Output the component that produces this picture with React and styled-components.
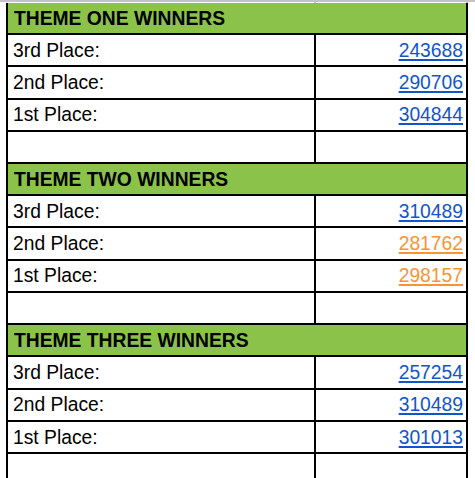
import React from "react";
import styled, { createGlobalStyle } from "styled-components";

const COLORS = {
  green: "#8bc34a",
  border: "#000000",
  grid: "#c4c4c4",
  link: "#1155cc",
  visited: "#f79433",
};

const SECTIONS = [
  {
    title: "THEME ONE WINNERS",
    rows: [
      { label: "3rd Place:", value: "243688" },
      { label: "2nd Place:", value: "290706" },
      { label: "1st Place:", value: "304844" },
    ],
  },
  {
    title: "THEME TWO WINNERS",
    rows: [
      { label: "3rd Place:", value: "310489" },
      { label: "2nd Place:", value: "281762", visited: true },
      { label: "1st Place:", value: "298157", visited: true },
    ],
  },
  {
    title: "THEME THREE WINNERS",
    rows: [
      { label: "3rd Place:", value: "257254" },
      { label: "2nd Place:", value: "310489" },
      { label: "1st Place:", value: "301013" },
    ],
  },
];

const App = () => {
  return (
    <>
      <GlobalStyle />
      <Page>
        <GridStrip>
          <GridTick />
          <GridTick />
          <span />
        </GridStrip>
        <Sheet>
          {SECTIONS.map((section) => (
            <React.Fragment key={section.title}>
              <Header>{section.title}</Header>
              {section.rows.map((row) => (
                <Row key={row.label}>
                  <LabelCell>{row.label}</LabelCell>
                  <ValueCell>
                    <Link href="#" $visited={row.visited}>
                      {row.value}
                    </Link>
                  </ValueCell>
                </Row>
              ))}
              <Row>
                <LabelCell />
                <ValueCell />
              </Row>
            </React.Fragment>
          ))}
        </Sheet>
      </Page>
    </>
  );
};

const GlobalStyle = createGlobalStyle`
  html, body {
    margin: 0;
    padding: 0;
    overflow: hidden;
    background: #ffffff;
  }
  body {
    font-family: "Liberation Sans", Arial, sans-serif;
  }
`;

const Page = styled.div`
  width: 475px;
  height: 478px;
  overflow: hidden;
`;

const GridStrip = styled.div`
  display: grid;
  grid-template-columns: 316px 152px 1fr;
  height: 3px;
  border-top: 2px solid ${COLORS.grid};
  box-sizing: border-box;
`;

const GridTick = styled.span`
  border-right: 2px solid ${COLORS.grid};
`;

const Sheet = styled.div`
  margin-left: 6px;
  width: 462px;
  border-left: 2px solid ${COLORS.border};
  border-right: 2px solid ${COLORS.border};
  box-sizing: border-box;
`;

const Header = styled.div`
  height: 32px;
  box-sizing: border-box;
  background: ${COLORS.green};
  border-bottom: 2px solid ${COLORS.border};
  padding: 1px 6px 0;
  display: flex;
  align-items: center;
  font-weight: bold;
  font-size: 19.3px;
  color: #000000;
`;

const Row = styled.div`
  display: grid;
  grid-template-columns: 308px 1fr;
  height: 32.3px;
  box-sizing: border-box;
  border-bottom: 2px solid ${COLORS.border};
`;

const Cell = styled.div`
  display: flex;
  align-items: center;
  padding: 1px 5px 0;
  font-size: 19.3px;
  color: #000000;
  white-space: nowrap;
`;

const LabelCell = styled(Cell)`
  border-right: 2px solid ${COLORS.border};
`;

const ValueCell = styled(Cell)`
  justify-content: flex-end;
  padding-right: 3px;
`;

const Link = styled.a`
  color: ${(p) => (p.$visited ? COLORS.visited : COLORS.link)};
  text-decoration: underline;
  text-decoration-thickness: 2px;
  text-underline-offset: 2px;
`;

export default App;
